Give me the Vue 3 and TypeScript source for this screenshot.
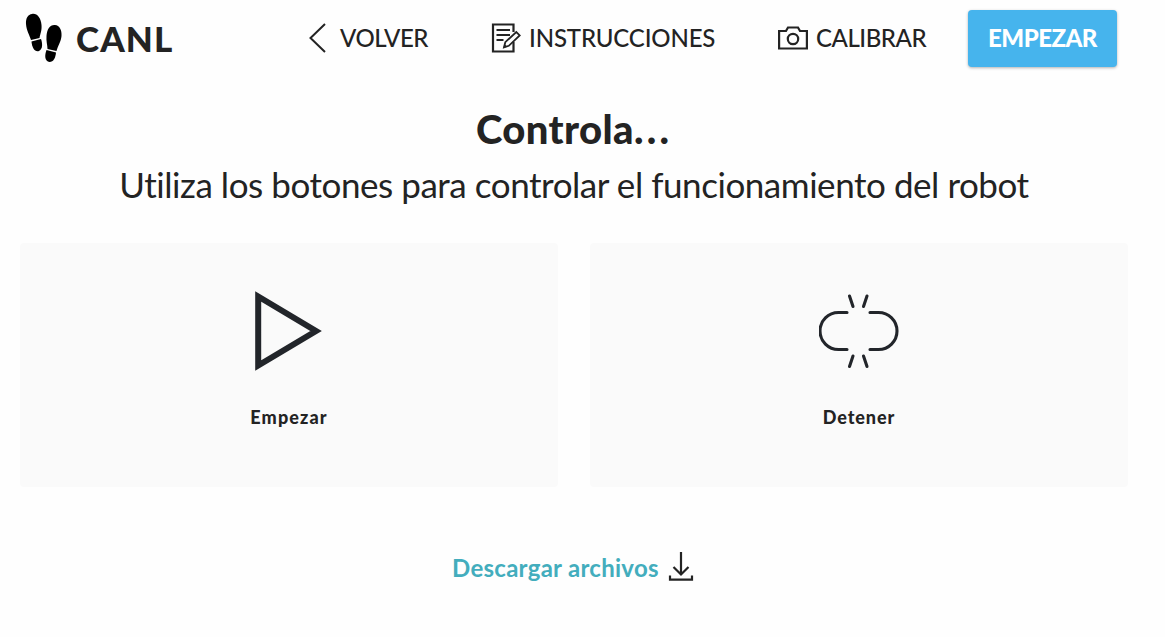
<script setup lang="ts">
interface Card {
  id: 'play' | 'stop'
  label: string
}

const cards: Card[] = [
  { id: 'play', label: 'Empezar' },
  { id: 'stop', label: 'Detener' },
]
</script>

<template>
  <div class="page">
    <header class="bar">
      <a class="brand">
        <svg class="feet" width="38" height="50" viewBox="0 0 38 50">
          <path d="M7 1C12 0 16 5 16.500 12C17 18 15 21 14.500 25L6 27C4.500 22 1.500 18 1 11C.7 5 3 1.500 7 1Z" />
          <path d="M6.500 28.500L16 26C17.500 30 18 36 14 38C10 39.500 7 35 6.500 28.500Z" />
          <path d="M30 12C34.500 12.500 37 17 36.500 23C36 29 33 32 31.500 38L22.500 36C22.500 32 21 28 21.500 23C22 16 25 11.500 30 12Z" />
          <path d="M21.500 37L31 39.500C30.500 45 28.500 49 24.500 49C19.500 48.500 19.500 42 21.500 37Z" />
        </svg>
        <span class="name">CANL</span>
      </a>
      <nav class="links">
        <a class="link back">
          <svg width="18" height="30" viewBox="0 0 18 30"><path d="M16 1L1.500 15L16 29" fill="none" stroke="#232323" stroke-width="2" /></svg>
          <span>VOLVER</span>
        </a>
        <a class="link help">
          <svg width="30" height="30" viewBox="0 0 30 30" fill="none" stroke="#232323" stroke-width="2">
            <path d="M22.500 9V1.500H2V28.500H22.500V19" stroke-width="2.200" />
            <path d="M5.500 7H19M5.500 12H19M5.500 17H12.500" />
            <path d="M13 24.300L14.300 19.200L25.300 9L28.700 12.400L17.800 22.800Z" fill="#fefefe" stroke-width="1.800" />
            <path d="M12.500 24.800L13.500 21L16.300 23.800Z" fill="#232323" stroke="none" />
          </svg>
          <span>INSTRUCCIONES</span>
        </a>
        <a class="link calibrate">
          <svg width="30" height="24" viewBox="0 0 30 24" fill="none" stroke="#232323" stroke-width="2.200">
            <path d="M1.100 5H8L10 1.500H20L22 5H28.900V22.500H1.100Z" /><circle cx="15" cy="13" r="5.200" />
          </svg>
          <span>CALIBRAR</span>
        </a>
      </nav>
      <button class="start" type="button"><span>EMPEZAR</span></button>
    </header>

    <main>
      <h1><span>Controla<span class="dots">...</span></span></h1>
      <p class="lead"><span>Utiliza los botones para controlar el funcionamiento del robot</span></p>
      <section class="cards">
        <article v-for="card in cards" :key="card.id" class="card" :class="card.id">
          <svg v-if="card.id === 'play'" width="80" height="80" viewBox="0 0 80 80">
            <path d="M9.200 5.500V74.500L67 40Z" fill="none" stroke="#22252a" stroke-width="6" />
          </svg>
          <svg v-else width="80" height="80" viewBox="0 0 80 80" fill="none" stroke="#22252a" stroke-width="3.100" stroke-linecap="round">
            <path d="M28 21.500H19.500A18.500 18.500 0 0 0 19.500 58.500H28M51 21.500H59.500A18.500 18.500 0 0 1 59.500 58.500H51" />
            <path d="M30.500 5L34 15.500M48 5L44.500 15.500M34 65L30.500 75.500M44.500 65L48 75.500" />
          </svg>
          <h2>{{ card.label }}</h2>
        </article>
      </section>
      <a class="download">
        <span>Descargar archivos</span>
        <svg width="26" height="30" viewBox="0 0 26 30" fill="none" stroke="#232323" stroke-width="2.200">
          <path d="M13 1V23M5.500 16L13 23.500L20.500 16M2 24.500V28.700H24V24.500" />
        </svg>
      </a>
    </main>
  </div>
</template>

<style>
body {
  background: #fefefe;
}
</style>

<style scoped>
.page {
  box-sizing: border-box;
  width: 1165px;
  height: 637px;
  overflow: hidden;
  background: #fefefe;
  color: #232323;
  font-family: Lato, "Liberation Sans", sans-serif;
  font-variant-ligatures: none;
}
svg {
  display: block;
  flex: none;
}
span {
  white-space: nowrap;
}
.bar {
  display: flex;
  height: 77px;
}
.brand {
  display: flex;
  width: 309px;
  padding: 13px 0 0 25px;
  box-sizing: border-box;
  flex: none;
}
.name {
  margin-left: 13px;
  font-size: 35px;
  font-weight: 900;
  line-height: 50px;
  letter-spacing: 1.1px;
}
.links {
  display: flex;
  width: 659px;
  flex: none;
}
.link {
  display: flex;
  align-items: center;
  height: 76px;
  font-size: 24px;
  font-weight: 500;
  letter-spacing: -0.45px;
}
.link span {
  margin-top: -2px;
}
.back {
  width: 182px;
  gap: 13px;
}
.help {
  width: 287px;
  gap: 8px;
  letter-spacing: -0.15px;
}
.calibrate {
  gap: 8px;
}
.start {
  width: 149px;
  height: 57px;
  margin-top: 10px;
  padding: 0;
  border: 0;
  border-radius: 4px;
  background: #46b4ed;
  box-shadow: 0 1px 3px rgba(0, 0, 0, 0.3);
  color: #fff;
  font: 900 24px/54px Lato, sans-serif;
  letter-spacing: -0.5px;
}
.start span {
  display: block;
  margin-top: -2px;
}
main {
  width: 1108px;
  margin-left: 20px;
}
h1 {
  margin: 26px 0 0;
  text-align: center;
  font-size: 40px;
  font-weight: 900;
  line-height: 52px;
  letter-spacing: 0.4px;
}
.dots {
  letter-spacing: 3.2px;
}
.lead {
  margin: 1px 0 0;
  text-align: center;
  font-size: 35px;
  font-weight: 400;
  line-height: 56px;
  letter-spacing: -0.45px;
}
.cards {
  display: grid;
  grid-template-columns: 538px 538px;
  gap: 32px;
  margin-top: 31px;
}
.card {
  display: flex;
  flex-direction: column;
  align-items: center;
  height: 244px;
  padding-top: 48px;
  box-sizing: border-box;
  border-radius: 4px;
  background: #fafafa;
}
h2 {
  margin: 32px 0 0;
  font-size: 18px;
  font-weight: 900;
  line-height: 28px;
  letter-spacing: 0.9px;
}
.play h2 {
  letter-spacing: 1.1px;
}
.download {
  display: flex;
  width: max-content;
  margin: 64px 0 0 432px;
  gap: 9px;
  color: #43adbd;
  font-size: 24px;
  font-weight: 700;
  line-height: 34px;
  letter-spacing: 0.28px;
}
</style>
